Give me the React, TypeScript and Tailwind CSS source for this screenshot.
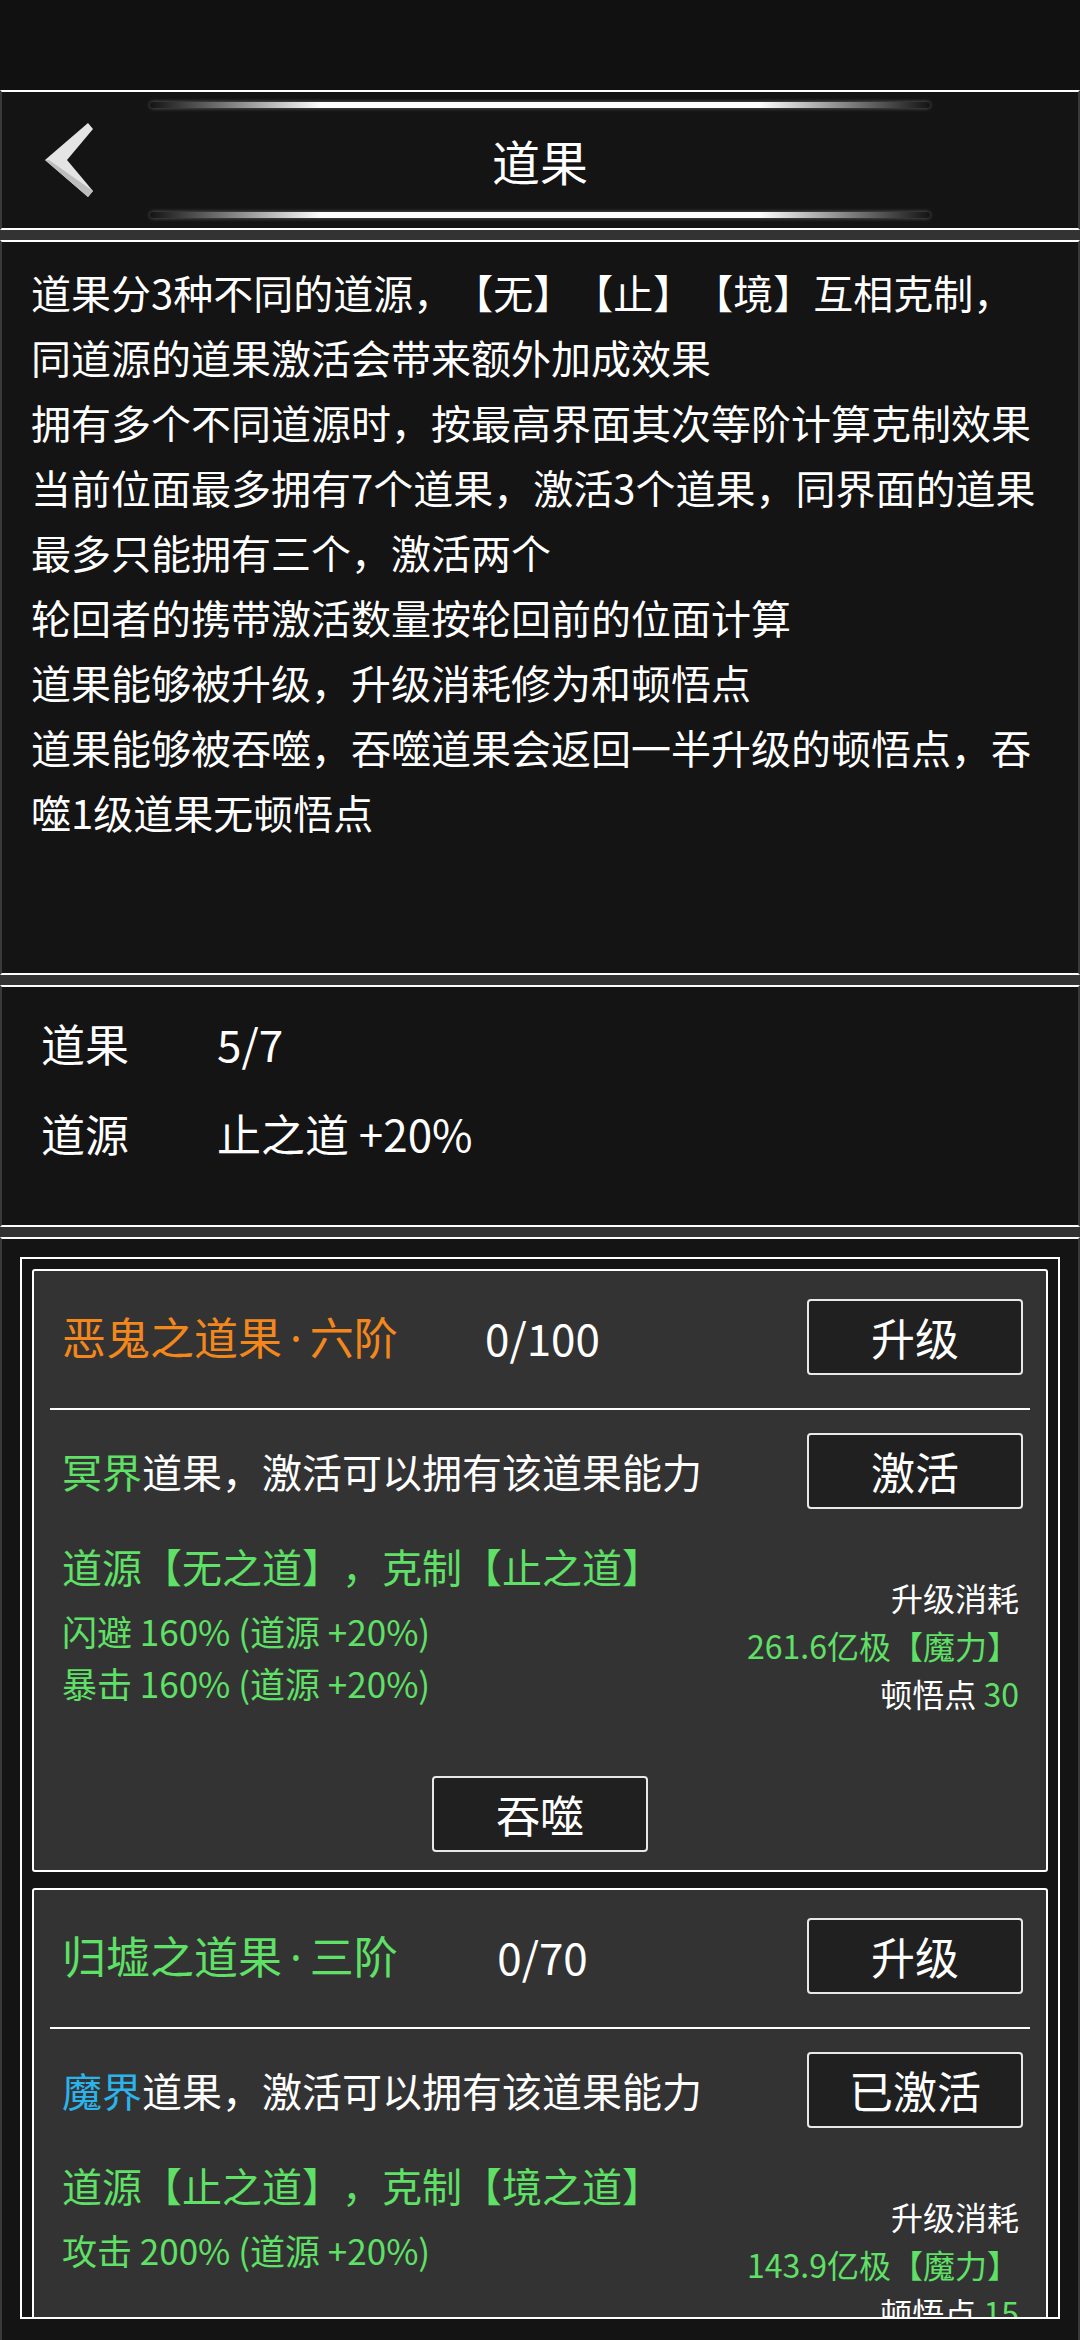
import React from 'react';

interface DaoCardProps {
    name: string;
    rank: string;
    titleColor: string;
    progress: string;
    realm: string;
    realmColor: string;
    activeLabel: string;
    source: string;
    stats: string[];
    cost: string;
    points: string;
}

const intro = [
    '道果分3种不同的道源，【无】【止】【境】互相克制，',
    '同道源的道果激活会带来额外加成效果',
    '拥有多个不同道源时，按最高界面其次等阶计算克制效果',
    '当前位面最多拥有7个道果，激活3个道果，同界面的道果',
    '最多只能拥有三个，激活两个',
    '轮回者的携带激活数量按轮回前的位面计算',
    '道果能够被升级，升级消耗修为和顿悟点',
    '道果能够被吞噬，吞噬道果会返回一半升级的顿悟点，吞',
    '噬1级道果无顿悟点',
];

const cards: DaoCardProps[] = [
    {
        name: '恶鬼之道果',
        rank: '六阶',
        titleColor: 'text-[#f4871c]',
        progress: '0/100',
        realm: '冥界',
        realmColor: 'text-[#5fe066]',
        activeLabel: '激活',
        source: '道源【无之道】，克制【止之道】',
        stats: ['闪避 160% (道源 +20%)', '暴击 160% (道源 +20%)'],
        cost: '261.6亿极【魔力】',
        points: '30',
    },
    {
        name: '归墟之道果',
        rank: '三阶',
        titleColor: 'text-[#5fe066]',
        progress: '0/70',
        realm: '魔界',
        realmColor: 'text-[#2bb3ea]',
        activeLabel: '已激活',
        source: '道源【止之道】，克制【境之道】',
        stats: ['攻击 200% (道源 +20%)'],
        cost: '143.9亿极【魔力】',
        points: '15',
    },
];

const GameButton: React.FC<{ label: string }> = ({ label }) => (
    <button className="w-[216px] h-[76px] shrink-0 flex items-center justify-center bg-[#202020] border-2 border-[#e8e8e8] rounded-[4px] text-white text-[44px] leading-none">
        {label}
    </button>
);

const GlowLine = () => (
    <div className="mx-auto w-[780px] h-[6px] rounded-full bg-[linear-gradient(90deg,rgba(255,255,255,0)_0%,rgba(255,255,255,0.35)_8%,#ffffff_22%,#ffffff_78%,rgba(255,255,255,0.35)_92%,rgba(255,255,255,0)_100%)] shadow-[0_0_4px_rgba(255,255,255,0.35)]" />
);

const DaoCard: React.FC<DaoCardProps> = (card) => (
    <div className="shrink-0 bg-[#333333] border-2 border-white rounded-[3px]">
        <div className="pt-[28px] pl-[28px] pr-[23px] grid grid-cols-[1fr_auto_1fr] items-center">
            <span className={`justify-self-start text-[44px] leading-none whitespace-nowrap ${card.titleColor}`}>
                {card.name}
                <span className="font-['Noto_Sans',sans-serif] mx-[8px]">·</span>
                {card.rank}
            </span>
            <span className="text-[44px] leading-none text-white">{card.progress}</span>
            <div className="justify-self-end">
                <GameButton label="升级" />
            </div>
        </div>

        <div className="mt-[33px] mx-[16px] h-[2px] bg-white" />

        <div className="mt-[23px] pl-[28px] pr-[23px] flex items-center justify-between">
            <p className="text-[40px] leading-none text-white">
                <span className={card.realmColor}>{card.realm}</span>道果，激活可以拥有该道果能力
            </p>
            <GameButton label={card.activeLabel} />
        </div>

        <div className="mt-[29px] pl-[28px] pr-[27px] flex items-start justify-between">
            <div className="text-[#5fe066]">
                <p className="text-[40px] leading-[56px]">{card.source}</p>
                <div className="mt-[11px] text-[35px] leading-[52px]">
                    {card.stats.map((s) => (
                        <p key={s}>{s}</p>
                    ))}
                </div>
            </div>
            <div className="mt-[35px] text-right text-[32px] leading-[48px] text-white">
                <p>升级消耗</p>
                <p className="text-[#5fe066]">{card.cost}</p>
                <p>
                    顿悟点 <span className="text-[#5fe066]">{card.points}</span>
                </p>
            </div>
        </div>

        <div className="mt-[59px] pb-[18px] flex justify-center">
            <GameButton label="吞噬" />
        </div>
    </div>
);

export default function App() {
    return (
        <div className="w-[1080px] h-[2340px] overflow-hidden bg-[#111111] font-['Noto_Sans_CJK_SC',sans-serif] text-white [text-spacing-trim:space-all]">
            <div className="h-[90px] bg-[#111111]" />

            {/* title bar */}
            <div className="h-[140px] flex flex-col bg-[#141414] border-y-2 border-white border-x-2 border-x-[#3a3a3a]">
                <div className="mt-[10px]">
                    <GlowLine />
                </div>
                <div className="flex-1 grid grid-cols-[1fr_auto_1fr] items-center px-[43px]">
                    <svg width="48" height="74" viewBox="0 0 48 74" className="justify-self-start">
                        <polygon points="43,0 48,6 22,37 48,68 43,74 0,37" fill="#e4e4e4" />
                        <polygon points="48,68 43,74 0,37 4,37" fill="#bdbdbd" />
                    </svg>
                    <h1 className="text-[48px] leading-none font-normal text-white">道果</h1>
                    <div />
                </div>
                <div className="mb-[10px]">
                    <GlowLine />
                </div>
            </div>

            <div className="h-[10px] bg-[#333333]" />

            {/* rules */}
            <div className="h-[735px] bg-[#141414] border-y-2 border-white border-x-2 border-x-[#3a3a3a] pt-[18px] pl-[29px]">
                {intro.map((line) => (
                    <p key={line} className="text-[40px] leading-[65px] whitespace-nowrap text-white">
                        {line}
                    </p>
                ))}
            </div>

            <div className="h-[10px] bg-[#333333]" />

            {/* summary */}
            <div className="h-[242px] bg-[#141414] border-y-2 border-white border-x-2 border-x-[#3a3a3a] pt-[11px] pl-[39px]">
                <div className="flex items-center h-[90px] text-[44px]">
                    <span className="w-[176px]">道果</span>
                    <span>5/7</span>
                </div>
                <div className="flex items-center h-[90px] text-[44px]">
                    <span className="w-[176px]">道源</span>
                    <span>止之道 +20%</span>
                </div>
            </div>

            <div className="h-[10px] bg-[#333333]" />

            {/* list */}
            <div className="h-[1103px] bg-[#141414] border-t-2 border-white border-x-2 border-x-[#3a3a3a] pt-[18px]">
                <div className="mx-[18px] h-[1062px] border-2 border-white p-[10px] overflow-hidden">
                    <div className="flex flex-col gap-[16px]">
                        {cards.map((c) => (
                            <DaoCard key={c.name} {...c} />
                        ))}
                    </div>
                </div>
            </div>
        </div>
    );
}
